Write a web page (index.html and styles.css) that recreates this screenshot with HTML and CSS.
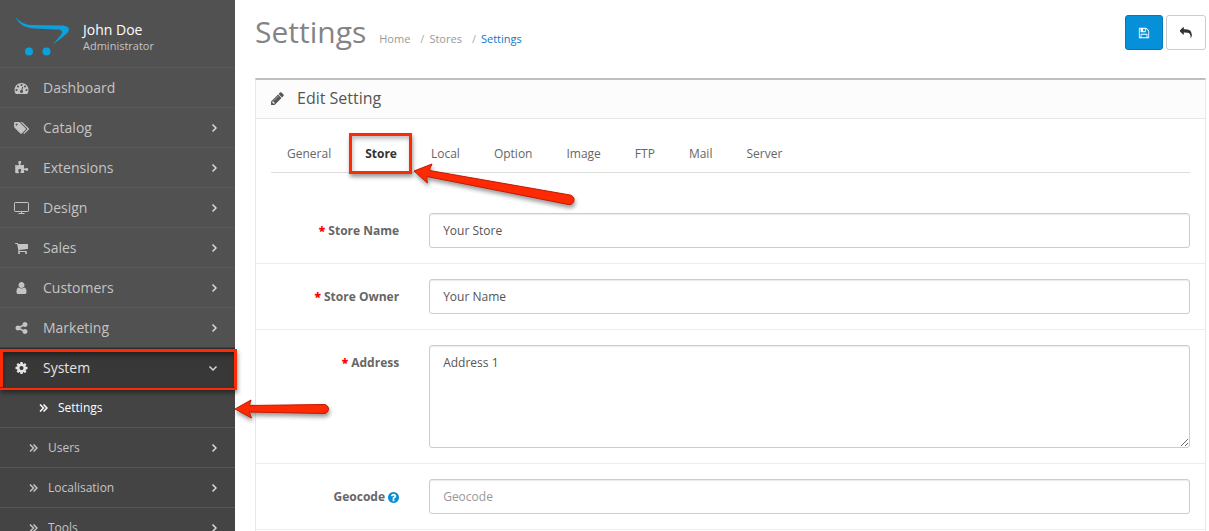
FILE: index.html
```html
<!DOCTYPE html>
<html lang="en">
<head>
<meta charset="utf-8">
<title>Settings</title>
<link rel="stylesheet" href="styles.css">
</head>
<body>
<div class="page">
  <nav class="sidebar" aria-label="Main">
    <div class="profile">
      <svg class="logo" viewBox="0 0 54 39" aria-hidden="true"><path d="M.5 -1C4 3 8 6.500 16 7L46 7.500C52 7.500 56 10 53 14C51 17 45 21 38 26.500C42 21 47 17 47 14C47 12 45 11.500 41 11.500L20 10.500C9 10 4 6 .5 -1Z"/><circle cx="14" cy="33.500" r="4"/><circle cx="31.500" cy="33.500" r="4"/></svg>
      <div>
        <div class="name">John Doe</div>
        <div class="role">Administrator</div>
      </div>
    </div>
    <ul class="menu">
      <li><a href="#"><svg class="icon" viewBox="0 0 1792 1792"><path d="M384 1152q0-53-37.500-90.500t-90.500-37.500-90.500 37.500-37.500 90.500 37.500 90.500 90.500 37.500 90.500-37.500 37.500-90.500zm192-448q0-53-37.500-90.500t-90.500-37.500-90.500 37.500-37.500 90.500 37.500 90.500 90.500 37.500 90.500-37.500 37.500-90.500zm428 481l101-382q6-26-7.500-48.500t-38.500-29.500-48 6.500-30 39.500l-101 382q-60 5-107 43.500t-63 98.500q-20 77 20 146t117 89 146-20 89-117q16-60-6-117t-72-91zm660-33q0-53-37.500-90.500t-90.500-37.500-90.500 37.500-37.500 90.500 37.500 90.500 90.500 37.500 90.500-37.500 37.500-90.500zm-640-640q0-53-37.500-90.500t-90.500-37.500-90.500 37.500-37.500 90.500 37.500 90.500 90.500 37.500 90.500-37.500 37.500-90.500zm448 192q0-53-37.500-90.500t-90.500-37.500-90.500 37.500-37.500 90.500 37.500 90.500 90.500 37.500 90.500-37.500 37.500-90.500zm320 448q0 261-141 483-19 29-54 29h-1402q-35 0-54-29-141-221-141-483 0-182 71-348t191-286 286-191 348-71 348 71 286 191 191 286 71 348z"/></svg><span>Dashboard</span></a></li>
      <li><a href="#"><svg class="icon" viewBox="0 0 1900 1792"><path d="M448 448q0-53-37.500-90.500t-90.500-37.500-90.500 37.500-37.500 90.500 37.500 90.500 90.500 37.500 90.500-37.500 37.500-90.500zm1067 576q0 53-37 90l-491 492q-39 37-91 37-53 0-90-37l-715-716q-38-37-64.500-101t-26.500-117v-416q0-52 38-90t90-38h416q53 0 117 26.500t102 64.500l715 714q37 39 37 91zm384 0q0 53-37 90l-491 492q-39 37-91 37-36 0-59-14t-53-45l470-470q37-37 37-90 0-52-37-91l-715-714q-38-38-102-64.500t-117-26.500h224q53 0 117 26.500t102 64.500l715 714q37 39 37 91z"/></svg><span>Catalog</span><svg class="chev" viewBox="0 0 7 10"><path d="M1.500 1.500L5 5L1.500 8.500"/></svg></a></li>
      <li><a href="#"><svg class="icon" viewBox="0 0 1792 1792"><path d="M1755 1083q0 81-44.500 135t-123.500 54q-41 0-77.500-17.500t-59-38-56.500-38-71-17.500q-110 0-110 124 0 39 16 115t15 115v5q-22 0-33 1-34 3-97.500 11.500t-115.500 13.500-98 5q-61 0-103-26.500t-42-83.500q0-37 17.500-71t38-56.500 38-59 17.500-77.500q0-79-54-123.500t-135-44.500q-84 0-143 45.500t-59 127.500q0 43 15 83t33.500 64.500 33.500 53 15 50.500q0 45-46 89-37 35-117 35-95 0-245-24-9-2-27.500-4t-27.500-4l-13-2q-1 0-3-1-2 0-2-1v-1024q2 1 17.500 3.500t34 5 21.500 3.500q150 24 245 24 80 0 117-35 46-44 46-89 0-22-15-50.500t-33.500-53-33.500-64.500-15-83q0-82 59-127.500t144-45.500q80 0 134 44.500t54 123.500q0 41-17.500 77.500t-38 59-38 56.500-17.500 71q0 57 42 83.500t103 26.500q64 0 180-15t163-17v2q-1 2-3.500 17.500t-5 34-3.500 21.500q-24 150-24 245 0 80 35 117 44 46 89 46 22 0 50.500-15t53-33.500 64.500-33.500 83-15q82 0 127.500 59t45.500 143z"/></svg><span>Extensions</span><svg class="chev" viewBox="0 0 7 10"><path d="M1.500 1.500L5 5L1.500 8.500"/></svg></a></li>
      <li><a href="#"><svg class="icon line" viewBox="0 0 15 14"><rect x=".5" y="1.500" width="14" height="9" rx=".7"/><path d="M4.500 12.500h6M7.500 10.500v2"/></svg><span>Design</span><svg class="chev" viewBox="0 0 7 10"><path d="M1.500 1.500L5 5L1.500 8.500"/></svg></a></li>
      <li><a href="#"><svg class="icon" viewBox="0 0 1792 1792"><path d="M704 1536q0 52-38 90t-90 38-90-38-38-90 38-90 90-38 90 38 38 90zm896 0q0 52-38 90t-90 38-90-38-38-90 38-90 90-38 90 38 38 90zm128-1088v512q0 24-16.500 42.500t-40.500 21.500l-1044 122q13 60 13 70 0 16-24 64h920q26 0 45 19t19 45-19 45-45 19h-1024q-26 0-45-19t-19-45q0-11 8-31.500t16-36 21.500-40 15.500-29.500l-177-823h-204q-26 0-45-19t-19-45 19-45 45-19h256q16 0 28.500 6.500t19.500 15.500 13 24.500 8 26 5.500 29.500 4.500 26h1201q26 0 45 19t19 45z"/></svg><span>Sales</span><svg class="chev" viewBox="0 0 7 10"><path d="M1.500 1.500L5 5L1.500 8.500"/></svg></a></li>
      <li><a href="#"><svg class="icon" viewBox="0 0 1792 1792"><path d="M1536 1399q0 109-62.500 187t-150.500 78h-854q-88 0-150.500-78t-62.500-187q0-85 8.500-160.500t31.500-152 58.500-131 94-89 134.500-34.500q131 128 313 128t313-128q76 0 134.500 34.500t94 89 58.500 131 31.500 152 8.500 160.500zm-256-887q0 159-112.500 271.500t-271.500 112.500-271.500-112.500-112.500-271.500 112.500-271.500 271.500-112.500 271.500 112.500 112.500 271.500z"/></svg><span>Customers</span><svg class="chev" viewBox="0 0 7 10"><path d="M1.500 1.500L5 5L1.500 8.500"/></svg></a></li>
      <li><a href="#"><svg class="icon" viewBox="0 0 1792 1792"><path d="M1344 1024q133 0 226.500 93.500t93.500 226.500-93.500 226.500-226.500 93.500-226.500-93.500-93.500-226.500q0-12 2-34l-360-180q-92 86-218 86-133 0-226.500-93.500t-93.500-226.500 93.500-226.500 226.500-93.500q126 0 218 86l360-180q-2-22-2-34 0-133 93.500-226.500t226.500-93.500 226.500 93.500 93.500 226.500-93.500 226.500-226.500 93.500q-126 0-218-86l-360 180q2 22 2 34t-2 34l360 180q92-86 218-86z"/></svg><span>Marketing</span><svg class="chev" viewBox="0 0 7 10"><path d="M1.500 1.500L5 5L1.500 8.500"/></svg></a></li>
      <li class="open">
        <a href="#"><svg class="icon" viewBox="0 0 1792 1792"><path d="M1152 896q0-106-75-181t-181-75-181 75-75 181 75 181 181 75 181-75 75-181zm512-109v222q0 12-8 23t-20 13l-185 28q-19 54-39 91 35 50 107 138 10 12 10 25t-9 23q-27 37-99 108t-94 71q-12 0-26-9l-138-108q-44 23-91 38-16 136-29 186-7 28-36 28h-222q-14 0-24.500-8.500t-11.500-21.500l-28-184q-49-16-90-37l-141 107q-10 9-25 9-14 0-25-11-126-114-165-168-7-10-7-23 0-12 8-23 15-21 51-66.500t54-70.500q-27-50-41-99l-183-27q-13-2-21-12.500t-8-23.500v-222q0-12 8-23t19-13l186-28q14-46 39-92-40-57-107-138-10-12-10-24 0-10 9-23 26-36 98.500-107.500t94.500-71.500q13 0 26 10l138 107q44-23 91-38 16-136 29-186 7-28 36-28h222q14 0 24.500 8.500t11.500 21.500l28 184q49 16 90 37l142-107q9-9 24-9 13 0 25 10 129 119 165 170 7 8 7 22 0 12-8 23-15 21-51 66.500t-54 70.500q26 50 41 98l183 28q13 2 21 12.500t8 23.500z"/></svg><span>System</span><svg class="chev down" viewBox="0 0 10 7"><path d="M1.500 1.500L5 5L8.500 1.500"/></svg></a>
        <i class="mark mark-system"></i>
        <ul class="submenu">
          <li class="current"><a href="#"><svg class="dbl" viewBox="0 0 9 10"><path d="M1 1.500L4.500 5L1 8.500M4.500 1.500L8 5L4.500 8.500"/></svg><span>Settings</span></a>
            <svg class="arrow arrow-settings" viewBox="0 0 100 28" aria-hidden="true"><path d="M1 12L17 3Q16 6 15.500 8.500L90 7.500A4.500 4.500 0 0 1 90 16.500L15.500 15Q16 18 17.500 21Z"/></svg></li>
          <li><a href="#"><svg class="dbl" viewBox="0 0 9 10"><path d="M1 1.500L4.500 5L1 8.500M4.500 1.500L8 5L4.500 8.500"/></svg><span>Users</span><svg class="chev" viewBox="0 0 7 10"><path d="M1.500 1.500L5 5L1.500 8.500"/></svg></a></li>
          <li><a href="#"><svg class="dbl" viewBox="0 0 9 10"><path d="M1 1.500L4.500 5L1 8.500M4.500 1.500L8 5L4.500 8.500"/></svg><span>Localisation</span><svg class="chev" viewBox="0 0 7 10"><path d="M1.500 1.500L5 5L1.500 8.500"/></svg></a></li>
          <li><a href="#"><svg class="dbl" viewBox="0 0 9 10"><path d="M1 1.500L4.500 5L1 8.500M4.500 1.500L8 5L4.500 8.500"/></svg><span>Tools</span><svg class="chev" viewBox="0 0 7 10"><path d="M1.500 1.500L5 5L1.500 8.500"/></svg></a></li>
        </ul>
      </li>
    </ul>
  </nav>
  <main class="content">
    <header class="header">
      <div class="heading">
        <h1>Settings</h1>
        <ol class="breadcrumb">
          <li><a href="#">Home</a></li>
          <li><a href="#">Stores</a></li>
          <li><a class="here" href="#">Settings</a></li>
        </ol>
      </div>
      <div class="actions">
        <button class="btn primary" type="button" aria-label="Save"><svg viewBox="0 0 1792 1792"><path d="M512 1536h768v-384h-768v384zm896 0h128v-896q0-14-10-38.500t-20-34.500l-281-281q-10-10-34-20t-39-10v416q0 40-28 68t-68 28h-576q-40 0-68-28t-28-68v-416h-128v1280h128v-416q0-40 28-68t68-28h832q40 0 68 28t28 68v416zm-384-928v-320q0-13-9.500-22.500t-22.500-9.500h-192q-13 0-22.500 9.500t-9.500 22.500v320q0 13 9.500 22.500t22.500 9.500h192q13 0 22.500-9.500t9.500-22.500zm640 32v928q0 40-28 68t-68 28h-1344q-40 0-68-28t-28-68v-1344q0-40 28-68t68-28h928q40 0 88 20t76 48l280 280q28 28 48 76t20 88z"/></svg></button>
        <button class="btn" type="button" aria-label="Cancel"><svg viewBox="0 0 1792 1792"><path d="M1792 1120q0 166-127 451-3 7-10.500 24t-13.500 30-13 22q-12 17-28 17-15 0-23.500-10t-8.500-25q0-9 2.500-26.500t2.500-23.500q5-68 5-123 0-112-19.500-200.500t-54-153.500-89-112-116-78-146-44.500-171.500-23.500-190.500-7h-224v256q0 26-19 45t-45 19-45-19l-512-512q-19-19-19-45t19-45l512-512q19-19 45-19t45 19 19 45v256h224q713 0 875 403 53 134 53 333z"/></svg></button>
      </div>
    </header>
    <section class="panel">
      <h2 class="panel-title"><svg class="pencil" viewBox="0 0 1792 1792"><path d="M491 1536l91-91-235-235-91 91v107h128v128h107zm523-928q0-22-22-22-10 0-17 7l-542 542q-7 7-7 17 0 22 22 22 10 0 17-7l542-542q7-7 7-17zm-54-192l416 416-832 832h-416v-416zm683 96q0 53-37 90l-166 166-416-416 166-165q36-38 90-38 53 0 91 38l235 234q37 39 37 91z"/></svg>Edit Setting</h2>
      <ul class="tabs">
        <li><a href="#">General</a></li>
        <li class="active"><a href="#">Store</a><i class="mark mark-store"></i>
          <svg class="arrow arrow-store" viewBox="0 0 168 50" aria-hidden="true"><path d="M1 8L19 1Q17 5 16.500 7.500L157 32A4.700 4.700 0 0 1 155.500 41.500L14 13.500Q13.500 17 14.500 20Z"/></svg></li>
        <li><a href="#">Local</a></li>
        <li><a href="#">Option</a></li>
        <li><a href="#">Image</a></li>
        <li><a href="#">FTP</a></li>
        <li><a href="#">Mail</a></li>
        <li><a href="#">Server</a></li>
      </ul>
      <form class="form">
        <div class="row"><label for="store-name"><b class="req">*</b> Store Name</label><div class="field"><input id="store-name" type="text" value="Your Store"></div></div>
        <div class="row"><label for="store-owner"><b class="req">*</b> Store Owner</label><div class="field"><input id="store-owner" type="text" value="Your Name"></div></div>
        <div class="row"><label for="address"><b class="req">*</b> Address</label><div class="field"><textarea id="address" rows="5">Address 1</textarea></div></div>
        <div class="row"><label for="geocode">Geocode <svg class="help" viewBox="128 128 1536 1536"><path d="M1024 1376v-192q0-14-9-23t-23-9h-192q-14 0-23 9t-9 23v192q0 14 9 23t23 9h192q14 0 23-9t9-23zm256-672q0-88-55.500-163t-138.500-116-170-41q-243 0-371 213-15 24 8 42l132 100q7 6 19 6 16 0 25-12 53-68 86-92 34-24 86-24 48 0 85.500 26t37.500 59q0 38-20 61t-68 45q-63 28-115.500 86.500t-52.500 125.500v36q0 14 9 23t23 9h192q14 0 23-9t9-23q0-19 21.500-49.500t54.500-49.500q32-18 49-28.500t46-35 44.500-48 28-60.500 12.500-81zm384 192q0 209-103 385.500t-279.500 279.500-385.500 103-385.500-103-279.500-279.500-103-385.500 103-385.500 279.500-279.500 385.500-103 385.500 103 279.500 279.500 103 385.500z"/></svg></label><div class="field"><input id="geocode" type="text" placeholder="Geocode"></div></div>
        <div class="row"></div>
      </form>
    </section>
  </main>
</div>
</body>
</html>
```

FILE: styles.css
```css
* { box-sizing: border-box; }
body {
  margin: 0;
  background: #fff;
  color: #666;
  font: 12px/20px "Open Sans", "Noto Sans", sans-serif;
}
ul, ol { margin: 0; padding: 0; list-style: none; }
a { color: inherit; text-decoration: none; }
svg { display: block; flex: none; fill: currentColor; }

.page { display: flex; height: 100vh; overflow: hidden; }

/* Sidebar */
.sidebar { flex: none; width: 235px; height: max-content; min-height: 100vh; background: #515151; color: #c4c4c4; }
.profile { display: flex; gap: 14px; padding: 18px 15px 10px; }
.logo { width: 54px; height: 39px; overflow: visible; fill: #0aa1dc; }
.name { padding-top: 2px; color: #fff; font-size: 14px; font-weight: 500; }
.role { font-size: 11px; line-height: 12px; }
.menu a { display: flex; align-items: center; height: 40px; padding: 1px 17px 0 14px; border-top: 1px solid #5a5a5a; font-size: 14px; }
.menu span { flex: 1; }
.icon { width: 15px; height: 14px; margin-right: 14px; }
.line { fill: none; stroke: currentColor; }
.chev { width: 7px; height: 10px; fill: none; stroke: #d8d8d8; stroke-width: 1.500; }
.down { width: 10px; height: 7px; }
.open, .current { position: relative; }
.open > a { background: linear-gradient(#2c2c2c, #383838 14px); color: #e4e4e4; border-color: #404040; }
.submenu { background: #444; }
.menu .submenu a { padding-left: 29px; border-color: #555; font-size: 12px; }
.menu .submenu .current a { padding-left: 39px; border-color: #383838; color: #fff; font-weight: 500; }
.dbl { width: 9px; height: 10px; margin-right: 10px; fill: none; stroke: currentColor; stroke-width: 1.500; }

/* Callouts */
.mark { position: absolute; border: 3px solid #fb2b06; box-shadow: 1px 3px 4px rgba(0, 0, 0, .4), inset 1px 3px 4px rgba(0, 0, 0, .25); pointer-events: none; }
.mark-system { top: 2px; left: 0; right: -2px; height: 41px; }
.mark-store { inset: -1px 1px -2px 0; }
.arrow { position: absolute; overflow: visible; fill: #fe2a04; stroke: #c01a02; stroke-width: 1; stroke-linejoin: round; filter: drop-shadow(1px 3px 2px rgba(0, 0, 0, .4)); pointer-events: none; }
.arrow-settings { left: 234px; top: 10px; width: 100px; height: 28px; }
.arrow-store { left: 64px; top: 29px; width: 168px; height: 50px; }

/* Header */
.content { flex: 1; min-width: 0; padding: 0 3px 0 20px; }
.header { display: flex; justify-content: space-between; align-items: flex-start; padding: 15px 0 28px; }
.heading { display: flex; align-items: baseline; gap: 13px; }
h1 { margin: 0; color: #848484; font-size: 30px; font-weight: 400; line-height: 34px; }
.breadcrumb { display: flex; color: #999; font-size: 11px; }
.breadcrumb li + li::before { content: "/"; padding: 0 5px 0 10px; color: #aaa; }
.here { color: #1078c8; }
.actions { display: flex; gap: 3px; }
.btn { display: grid; place-items: center; width: 40px; height: 35px; padding: 0; border: 1px solid #ccc; border-radius: 3px; background: #fff; color: #333; }
.btn svg { width: 12px; height: 12px; }
.primary { width: 38px; border-color: #0678b8; background: #0590d9; color: #fff; }

/* Panel */
.panel { border: 1px solid #e8e8e8; border-top: 2px solid #bfbfbf; }
.panel-title { display: flex; align-items: center; gap: 12px; height: 39px; margin: 0 0 15px; padding: 0 14px 2px; border-bottom: 1px solid #e8e8e8; background: #fcfcfc; color: #555; font-size: 16px; font-weight: 400; }
.pencil { width: 15px; height: 15px; }
.tabs { display: flex; gap: 2px; margin: 0 15px 25px; border-bottom: 1px solid #ddd; }
.tabs li { position: relative; }
.tabs a { display: block; padding: 10px 16px 8px; }
.active a { color: #333; font-weight: 700; }
.row { display: grid; grid-template-columns: 1fr 5fr; padding: 15px 0; }
.row + .row { border-top: 1px solid #ededed; }
label { padding: 8px 15px 0; font-weight: 700; text-align: right; }
.req { color: #f00; }
.help { display: inline-block; width: 11px; height: 11px; vertical-align: -2px; color: #0590d9; }
.field { padding: 0 15px; }
input, textarea { display: block; width: 100%; height: 35px; margin: 0; padding: 7px 13px; border: 1px solid #ccc; border-radius: 3px; background: #fff; box-shadow: inset 0 1px 1px rgba(0, 0, 0, .08); color: #555; font: inherit; }
textarea { height: 103px; resize: vertical; }
input::placeholder { color: #999; opacity: 1; }
```
